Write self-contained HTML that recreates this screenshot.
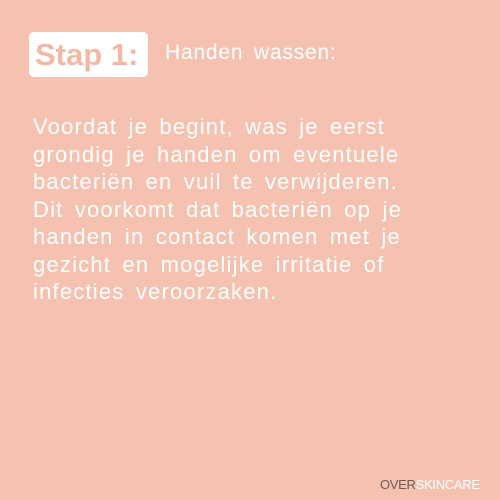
<!DOCTYPE html>
<html><head><style>
html,body{margin:0;padding:0}
body{width:500px;height:500px;background:#f5c2b2;position:relative;overflow:hidden;font-family:"Liberation Sans",sans-serif;color:#fff}
.box{position:absolute;left:29px;top:32px;width:119px;height:45px;background:#fff;border-radius:5px}
.stap{position:absolute;left:35px;top:37px;font-size:31px;font-weight:bold;color:#f4b8a6;letter-spacing:0px}
.h{position:absolute;left:165px;top:41px;font-size:21px;letter-spacing:0.8px;word-spacing:4px}
.t{position:absolute;left:33px;top:113px;font-size:22px;line-height:27.5px;white-space:nowrap;letter-spacing:1.2px;word-spacing:4px}
.logo{position:absolute;left:380px;top:477px;font-size:13px;letter-spacing:-0.3px}
.logo b{font-weight:normal;color:#6e5a57}
</style></head><body>
<div class="box"></div>
<div class="stap">Stap 1:</div>
<div class="h">Handen wassen:</div>
<div class="t">Voordat je begint, was je eerst<br>grondig je handen om eventuele<br>bacteriën en vuil te verwijderen.<br>Dit voorkomt dat bacteriën op je<br>handen in contact komen met je<br>gezicht en mogelijke irritatie of<br>infecties veroorzaken.</div>
<div class="logo"><b>OVER</b>SKINCARE</div>
</body></html>
